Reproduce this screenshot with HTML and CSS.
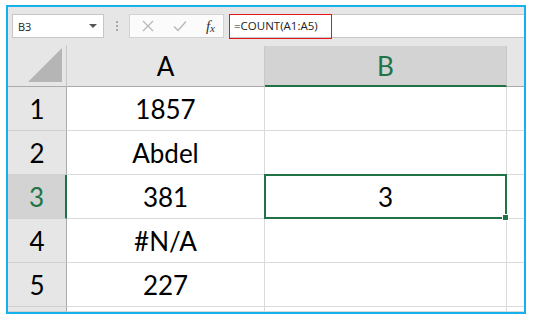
FILE: index.html
```html
<!DOCTYPE html>
<html lang="en">
  <head>
    <meta charset="UTF-8" />
    <meta name="viewport" content="width=device-width, initial-scale=1.0" />
    <title>COUNT example</title>
    <link rel="stylesheet" href="styles.css">
  </head>
  <body>
    <div class="frame">
      <div class="formula-bar">
        <div class="name-box">
          <span>B3</span>
          <span class="caret"></span>
        </div>
        <div class="grip">
          <span></span><span></span><span></span>
        </div>
        <div class="fx-buttons">
          <svg width="12" height="12" viewBox="0 0 12 12">
            <path d="M1 1 L11 11 M11 1 L1 11" stroke="#b8b8b8" stroke-width="1.3" fill="none" />
          </svg>
          <svg width="14" height="12" viewBox="0 0 14 12">
            <path d="M1 6.5 L5 10.5 L13 1.5" stroke="#b8b8b8" stroke-width="1.4" fill="none" />
          </svg>
          <span class="fx">f<sub>x</sub></span>
        </div>
        <div class="formula-input">
          <span class="formula">=COUNT(A1:A5)</span>
        </div>
      </div>

      <div class="sheet">
        <div class="corner">
          <svg width="36" height="36" viewBox="0 0 36 36">
            <polygon points="35,1 35,35 1,35" fill="#b5b5b5" />
          </svg>
        </div>
        <div class="col-head">A</div>
        <div class="col-head active">B</div>
        <div class="col-head rest"></div>

        <div class="row-head">1</div>
        <div class="cell">1857</div>
        <div class="cell"></div>
        <div class="cell rest"></div>

        <div class="row-head">2</div>
        <div class="cell">Abdel</div>
        <div class="cell"></div>
        <div class="cell rest"></div>

        <div class="row-head active">3</div>
        <div class="cell">381</div>
        <div class="cell selected">3</div>
        <div class="cell rest"></div>

        <div class="row-head">4</div>
        <div class="cell">#N/A</div>
        <div class="cell"></div>
        <div class="cell rest"></div>

        <div class="row-head">5</div>
        <div class="cell">227</div>
        <div class="cell"></div>
        <div class="cell rest"></div>

        <div class="row-head stub"></div>
        <div class="cell stub"></div>
        <div class="cell stub"></div>
        <div class="cell rest stub"></div>
      </div>
    </div>
  </body>
</html>
```

FILE: styles.css
```css
body {
  margin: 0;
  background-color: white;
  font-family: Lato, "Open Sans", sans-serif;
}

.frame {
  margin: 5px 0 0 6px;
  width: 516px;
  height: 305px;
  border: 2px solid #14b1ec;
  background-color: #e6e6e6;
  overflow: hidden;
}

.formula-bar {
  display: flex;
  align-items: center;
  height: 38px;
  padding-left: 4px;
}

.name-box {
  display: flex;
  align-items: center;
  justify-content: space-between;
  box-sizing: border-box;
  width: 92px;
  height: 24px;
  padding: 0 6px 0 5px;
  background-color: white;
  border: 1px solid #c6c6c6;
  font-family: "Open Sans", sans-serif;
  font-size: 11px;
  color: #222;
}

.caret {
  width: 0;
  height: 0;
  border-left: 4px solid transparent;
  border-right: 4px solid transparent;
  border-top: 4px solid #555;
}

.grip {
  display: flex;
  flex-direction: column;
  gap: 2px;
  margin: 0 11px 0 12px;
}

.grip span {
  width: 2px;
  height: 2px;
  background-color: #a8a8a8;
}

.fx-buttons {
  display: flex;
  align-items: center;
  justify-content: space-between;
  box-sizing: border-box;
  width: 95px;
  height: 24px;
  padding: 0 8px 0 12px;
  background-color: #fbfbfb;
  border: 1px solid #d2d2d2;
}

.fx {
  font-family: "Liberation Serif", serif;
  font-style: italic;
  font-size: 15px;
  color: #333;
}

.fx sub {
  font-size: 11px;
  vertical-align: -1px;
}

.formula-input {
  flex: 1;
  display: flex;
  align-items: center;
  height: 22px;
  margin-left: 5px;
  background-color: white;
  border-top: 1px solid #c6c6c6;
  border-bottom: 1px solid #c6c6c6;
}

.formula {
  box-sizing: border-box;
  height: 25px;
  width: 103px;
  padding-left: 4px;
  line-height: 22px;
  border: 1.5px solid #e8141c;
  font-family: "Open Sans", sans-serif;
  font-size: 11.5px;
  color: #222;
}

.sheet {
  display: grid;
  grid-template-columns: 59px 198px 242px 1fr;
  grid-template-rows: 42px repeat(5, 44px) 1fr;
  height: 267px;
  font-size: 26px;
}

.corner {
  display: flex;
  align-items: flex-end;
  justify-content: flex-end;
  padding: 0 3px 3px 0;
  border-right: 1px solid #c8c8c8;
  border-bottom: 1px solid #ababab;
}

.col-head {
  display: flex;
  align-items: center;
  justify-content: center;
  margin-top: 1px;
  border-right: 1px solid #c8c8c8;
  border-bottom: 1px solid #ababab;
  color: #000;
}

.col-head.active {
  background-color: #d3d3d3;
  color: #217346;
  border-bottom: 2px solid #217346;
}

.col-head.rest {
  border-right: none;
}

.row-head {
  display: flex;
  align-items: center;
  justify-content: center;
  border-right: 1px solid #ababab;
  border-bottom: 1px solid #d0d0d0;
  color: #000;
}

.row-head.active {
  background-color: #d3d3d3;
  color: #217346;
  border-right: 2px solid #217346;
}

.cell {
  display: flex;
  align-items: center;
  justify-content: center;
  background-color: white;
  border-right: 1px solid #dadada;
  border-bottom: 1px solid #dadada;
  color: #000;
}

.cell.rest {
  border-right: none;
}

.cell.selected {
  position: relative;
  margin: -1px 0 0 -1px;
  border: 2px solid #217346;
}

.cell.selected::after {
  content: "";
  position: absolute;
  right: -4px;
  bottom: -4px;
  width: 5px;
  height: 5px;
  background-color: #217346;
  border: 1px solid white;
}
```
